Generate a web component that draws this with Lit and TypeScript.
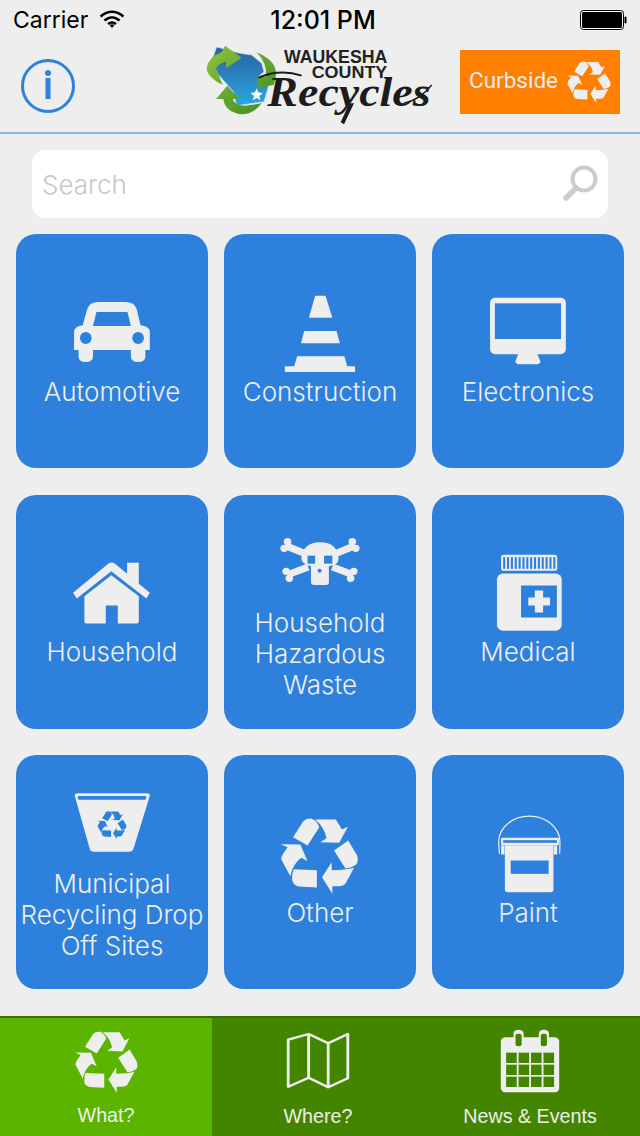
import { LitElement, html, css, svg, unsafeCSS } from "lit";
import { customElement } from "lit/decorators.js";

const BLUE = "#2d80dc";
const recyclePaths = svg`
  <path d="M706 155L735 108Q745 97 760 100Q775 105 782 125L748 180Z"/>
  <path d="M770 102L830 102L848 132L865 124L840 172L785 170L803 158Q797 125 770 102Z"/>
  <path d="M825 195L866 165L892 210Q898 235 885 240Q875 247 858 249Z"/>
  <path d="M883 247L858 295Q852 302 840 302L820 302L820 325L790 275L818 230L818 254Q860 254 883 247Z"/>
  <path d="M775 254L775 306L722 303Q703 298 703 280Q703 262 708 251Z"/>
  <path d="M670 176L727 177L748 227L730 217Q705 235 698 272L672 222Q670 215 680 200L690 185Z"/>
`;

const recycleIcon = (cls: string) => html`<svg class=${cls} viewBox="670 97 226 228" preserveAspectRatio="none">${recyclePaths}</svg>`;

const box = (x: number, y: number, content: unknown) => html`<svg class="icon" viewBox="${x} ${y} 232.3 240" preserveAspectRatio="none">${content}</svg>`;

const car = svg`
  <path d="M70 155Q70 135 95 133L108 85Q115 63 140 63L220 63Q245 63 252 85L263 133Q290 135 290 155L290 207L277 207L277 225Q277 243 256 243Q235 243 235 225L235 207L125 207L125 225Q125 243 104 243Q83 243 83 225L83 207L70 207Z"/>
  <path fill=${BLUE} d="M135 93L225 93L235 135L125 135Z"/>
  <ellipse fill=${BLUE} cx="104" cy="171" rx="17" ry="18"/>
  <ellipse fill=${BLUE} cx="256" cy="171" rx="17" ry="18"/>`;

const cone = svg`
  <path d="M770 44L800 44L820 110L752 110Z"/>
  <path d="M738 150L832 150L842 187L729 187Z"/>
  <path d="M718 226L855 226L863 256L886 256L886 273L682 273L682 256L709 256Z"/>`;

const monitor = svg`
  <rect x="1278" y="50" width="220" height="170" rx="15"/>
  <rect fill=${BLUE} x="1292" y="67" width="192" height="107"/>
  <path d="M1360 218L1415 218L1425 243L1418 250L1358 250L1351 243Z"/>`;

const house = svg`
  <path d="M67 190L170 102Q178 96 188 102L224 133L224 100L258 100L258 163L290 190L280 207L178 125L78 207Z"/>
  <path d="M178 137L258 200L258 275Q258 282 250 282L197 282L197 228L162 228L162 282L108 282Q100 282 100 275L100 200Z"/>`;

const skull = svg`
  <g stroke="#eeeeee" stroke-width="21">
    <line x1="685" y1="50" x2="745" y2="76"/><line x1="885" y1="50" x2="825" y2="76"/>
    <line x1="690" y1="137" x2="750" y2="114"/><line x1="880" y1="137" x2="820" y2="114"/>
  </g>
  <circle cx="690" cy="38" r="11"/><circle cx="680" cy="58" r="11"/>
  <circle cx="878" cy="38" r="11"/><circle cx="888" cy="58" r="11"/>
  <circle cx="686" cy="127" r="11"/><circle cx="695" cy="148" r="11"/>
  <circle cx="882" cy="127" r="11"/><circle cx="873" cy="148" r="11"/>
  <path d="M785 40Q835 40 838 90Q838 108 810 112L810 160Q810 168 802 168L768 168Q758 168 758 160L758 112Q730 105 730 88Q735 40 785 40Z"/>
  <rect fill=${BLUE} x="748" y="80" width="22" height="24"/>
  <rect fill=${BLUE} x="796" y="80" width="24" height="24"/>
  <circle fill=${BLUE} cx="783" cy="125" r="6"/>`;

const bars = [...Array(14).keys()].map((i) => svg`<rect fill=${BLUE} x="${1316 + i * 11.2}" y="83" width="6" height="35"/>`);
const medical = svg`
  <rect x="1310" y="76" width="163" height="48" rx="8"/>
  ${bars}
  <rect x="1298" y="132" width="188" height="172" rx="18"/>
  <rect fill=${BLUE} x="1368" y="168" width="104" height="96"/>
  <rect x="1389" y="204" width="63" height="24"/>
  <rect x="1408" y="183" width="24" height="66"/>`;

const trash = svg`
  <path d="M72 32Q72 25 80 25L282 25Q290 25 290 32L243 190Q240 200 232 200L125 200Q117 200 115 190Z"/>
  <rect fill=${BLUE} x="80" y="33" width="200" height="11" rx="5"/>
  <g fill=${BLUE} transform="translate(138 78) scale(.376 .373) translate(-670 -97)">${recyclePaths}</g>`;

const paint = svg`
  <path fill="none" stroke="#eeeeee" stroke-width="3.5" d="M1305 205L1303 170C1303 127 1343 92 1392 92C1441 92 1481 127 1481 170L1480 205"/>
  <rect x="1310" y="157" width="168" height="22" rx="3"/>
  <rect fill=${BLUE} x="1316" y="164" width="156" height="8"/>
  <rect x="1310" y="180" width="10" height="27"/><rect x="1463" y="180" width="10" height="27"/>
  <path d="M1321 179L1462 179L1462 312Q1462 320 1454 320L1329 320Q1321 320 1321 312Z"/>
  <rect fill=${BLUE} x="1338" y="225" width="110" height="40"/>`;

const cards = [
  { label: "Automotive", x: 64, y: 45, icon: car },
  { label: "Construction", x: 668, y: 45, icon: cone },
  { label: "Electronics", x: 1272, y: 45, icon: monitor },
  { label: "Household", x: 64, y: 79.5, icon: house },
  { label: "Household\nHazardous\nWaste", x: 668, y: -6, icon: skull, multi: true },
  { label: "Medical", x: 1272, y: 79.5, icon: medical },
  { label: "Municipal\nRecycling Drop\nOff Sites", x: 64, y: 9, icon: trash, multi: true },
  { label: "Other", x: 668, y: 94.5, icon: recyclePaths },
  { label: "Paint", x: 1272, y: 94.5, icon: paint },
];

const calCells = [0, 1, 2].flatMap((r) =>
  [0, 1, 2, 3].map((c) => svg`<rect fill="#448500" x="${1240 + c * 30.5}" y="${131 + r * 36}" width="26" height="31"/>`)
);

@customElement("app-root")
export class AppRoot extends LitElement {
  static styles = css`
    :host { display: block; width: 640px; height: 1136px; background: #eeeeee; overflow: hidden; font-family: Inter, "Liberation Sans", sans-serif; }
    .page { display: flex; flex-direction: column; height: 1136px; }
    .status { height: 40px; display: grid; grid-template-columns: 1fr auto 1fr; align-items: center; padding: 0 13px; color: #000; }
    .status .left { display: flex; align-items: center; gap: 11px; font-size: 23px; }
    .status .time { font-size: 25px; font-weight: 500; margin-left: 6px; }
    .status .right { justify-self: end; display: flex; align-items: center; }
    .wifi { width: 26px; height: 18px; margin-top: -2px; }
    .batt { width: 47px; height: 20px; }
    .header { display: flex; align-items: flex-start; padding-left: 21px; border-bottom: 2px solid #85b8e6; box-sizing: border-box; height: 94px; }
    .info { width: 54px; height: 54px; margin-top: 19px; flex: none; }
    .logo { width: 250px; height: 95px; margin: -5px 0 0 115px; flex: none; overflow: visible; }
    .curb { width: 160px; height: 64px; margin: 10px 0 0 20px; background: #ff7f00; color: #eeeeee; display: flex; align-items: center; gap: 9px; font-size: 22.5px; font-family: Roboto, sans-serif; padding-left: 9px; box-sizing: border-box; }
    .curb span { margin-top: -4px; }
    .curb-icon { width: 44px; height: 42px; fill: #eeeeee; }
    .search { margin: 16px 32px 16px; height: 68px; background: #fff; border-radius: 13px; display: flex; align-items: center; justify-content: space-between; padding: 0 9px 0 10px; }
    .placeholder { color: #c7c7cd; font-size: 26px; font-weight: 300; }
    .mag { width: 38px; height: 38px; margin-top: -2px; }
    .grid { display: grid; grid-template-columns: repeat(3, 192px); grid-auto-rows: 234px; column-gap: 16px; row-gap: 26.5px; padding: 0 16px; }
    .card { background: ${unsafeCSS(BLUE)}; border-radius: 20px; display: flex; flex-direction: column; align-items: center; justify-content: center; color: #eeeeee; box-sizing: border-box; }
    .card.multi { padding-top: 4px; }
    .icon { width: 80px; height: 80px; fill: #eeeeee; flex: none; overflow: visible; }
    .label { font-size: 26px; line-height: 31px; font-weight: 300; text-align: center; white-space: pre-line; }
    .tabs { margin-top: auto; height: 120px; display: grid; grid-template-columns: 212px 212px 212px 4px; background: #448500; border-top: 2px solid #3a7000; box-sizing: border-box; color: #eeeeee; }
    .tab { display: flex; flex-direction: column; align-items: center; font-family: "Liberation Sans", sans-serif; font-size: 19.7px; white-space: nowrap; }
    .tab.on { background: #5ab400; }
    .tab-icon { width: 63px; height: 62px; fill: #eeeeee; margin-top: 13px; }
    .tab-svg { width: 80px; height: 66px; fill: #eeeeee; margin-top: 11px; }
    .tab span { margin-top: 10px; line-height: 22px; }
    .tab.on span { margin-top: 11px; }
  `;

  render() {
    return html`<div class="page">
      <div class="status">
        <div class="left">Carrier
          <svg class="wifi" viewBox="0 0 26 18"><path fill="none" stroke="#000" stroke-width="2.6" d="M1.5 6.5Q13-3 24.5 6.5M5.5 10.5Q13 4 20.5 10.5M9 14Q13 11 17 14"/><path d="M10.5 15L13 18L15.5 15Q13 13.5 10.5 15Z"/></svg>
        </div>
        <div class="time">12:01 PM</div>
        <div class="right">
          <svg class="batt" viewBox="0 0 47 20"><rect x=".5" y=".5" width="43" height="19" rx="3" fill="#fff" stroke="#000"/><rect x="2" y="2" width="40" height="16" rx="1.5"/><rect x="44.5" y="6.5" width="2" height="7" rx="1"/></svg>
        </div>
      </div>
      <div class="header">
        <svg class="info" viewBox="0 0 54 54">
          <circle cx="27" cy="27" r="25.5" fill="none" stroke=${BLUE} stroke-width="3"/>
          <circle cx="27" cy="14" r="3" fill=${BLUE}/><rect x="24.5" y="19" width="5" height="21" fill=${BLUE}/>
        </svg>
        <svg class="logo" viewBox="0 0 750 285">
          <defs>
            <linearGradient id="wi" gradientUnits="userSpaceOnUse" x1="0" y1="40" x2="0" y2="212"><stop offset="0" stop-color="#2a63a0"/><stop offset="1" stop-color="#29a8e0"/></linearGradient>
            <linearGradient id="gr" gradientUnits="userSpaceOnUse" x1="50" y1="30" x2="250" y2="240"><stop offset="0" stop-color="#8fc43c"/><stop offset="1" stop-color="#3f8a22"/></linearGradient>
          </defs>
          <path d="M80 36L150 55L185 60L215 85L222 110L205 125L235 155L222 200L140 212L130 170L95 130L60 92Z" fill="url(#wi)" stroke="#c6dff0" stroke-width="2"/>
          <path fill="url(#gr)" d="M50 100Q55 65 95 52L105 32L155 68L108 100L108 80Q85 85 78 100L98 150L80 140Q50 120 50 100Z"/>
          <path fill="url(#gr)" d="M200 52Q255 75 258 112Q258 135 250 150L205 158L200 125L228 125Q232 85 200 52Z"/>
          <path fill="url(#gr)" d="M112 152L148 192L128 192Q135 212 165 212L215 205Q190 238 155 238Q105 232 100 192L78 192Z"/>
          <path fill="#f4f4f4" d="M200 160L205 172L219 174L208 183L212 196L200 189L188 196L192 183L182 174L195 172Z"/>
          <text x="282" y="85" font-family="Liberation Sans" font-weight="700" font-size="55" textLength="310" lengthAdjust="spacingAndGlyphs" fill="#222">WAUKESHA</text>
          <text x="365" y="130" font-family="Liberation Sans" font-weight="700" font-size="49" textLength="227" lengthAdjust="spacingAndGlyphs" fill="#222">COUNTY</text>
          <text x="232" y="212" font-family="Liberation Serif" font-style="italic" font-weight="700" font-size="128" textLength="490" lengthAdjust="spacingAndGlyphs" fill="#1c1c1c">Recycles</text>
          <path fill="none" stroke="#1c1c1c" stroke-width="6" d="M205 128Q270 100 335 122"/>
          <path fill="#1c1c1c" d="M478 205L492 205L462 268L452 262Z"/>
          <path fill="none" stroke="#1c1c1c" stroke-width="4" d="M640 205Q690 195 725 150"/>
        </svg>
        <div class="curb"><span>Curbside</span>${recycleIcon("curb-icon")}</div>
      </div>
      <div class="search">
        <span class="placeholder">Search</span>
        <svg class="mag" viewBox="0 0 38 38"><circle cx="23" cy="15" r="11.5" fill="none" stroke="#ccc" stroke-width="4"/><path d="M15 24L5 34" stroke="#ccc" stroke-width="5.5" stroke-linecap="round"/></svg>
      </div>
      <div class="grid">
        ${cards.map((c) => html`<div class="card ${c.multi ? "multi" : ""}">${box(c.x, c.y, c.icon)}<div class="label">${c.label}</div></div>`)}
      </div>
      <div class="tabs">
        <div class="tab on">${recycleIcon("tab-icon")}<span>What?</span></div>
        <div class="tab">
          <svg class="tab-svg" viewBox="681 60 196 198" preserveAspectRatio="none"><path fill="none" stroke="#eeeeee" stroke-width="7" stroke-linejoin="round" d="M706 92L756 75L804 103L852 75L852 208L804 235L756 206L706 233ZM756 75L756 206M804 103L804 235"/></svg>
          <span>Where?</span>
        </div>
        <div class="tab">
          <svg class="tab-svg" viewBox="1200.5 60 196 198" preserveAspectRatio="none">
            <rect x="1227" y="85" width="143" height="165" rx="12"/>
            <rect x="1258" y="62" width="25" height="52" rx="12"/><rect x="1263" y="74" width="15" height="38" rx="6" fill="#448500"/>
            <rect x="1320" y="62" width="25" height="52" rx="12"/><rect x="1325" y="74" width="15" height="38" rx="6" fill="#448500"/>
            ${calCells}
          </svg>
          <span>News &amp; Events</span>
        </div>
      </div>
    </div>`;
  }
}
